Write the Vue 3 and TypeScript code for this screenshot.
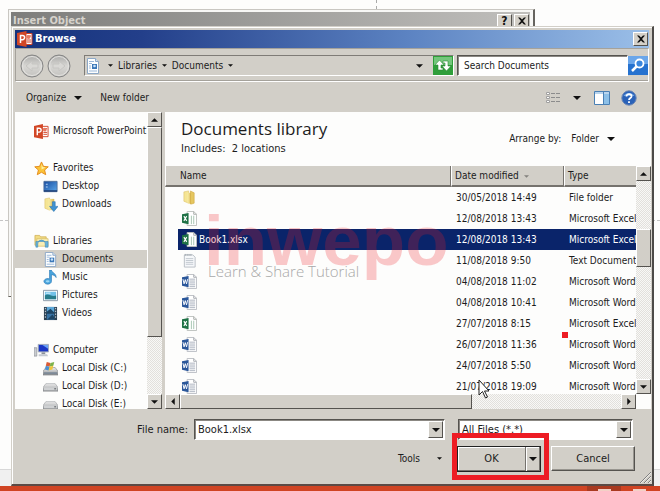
<script setup lang="ts">
import { ref } from 'vue'

interface NavItem { label: string; icon: string; child?: boolean }
interface FileRow { name: string; icon: string; date: string; type: string }

const groups: NavItem[][] = [
  [{ label: 'Microsoft PowerPoint', icon: 'ppt' }],
  [
    { label: 'Favorites', icon: 'star' },
    { label: 'Desktop', icon: 'desktop', child: true },
    { label: 'Downloads', icon: 'downloads', child: true },
  ],
  [
    { label: 'Libraries', icon: 'libraries' },
    { label: 'Documents', icon: 'document', child: true },
    { label: 'Music', icon: 'music', child: true },
    { label: 'Pictures', icon: 'pictures', child: true },
    { label: 'Videos', icon: 'videos', child: true },
  ],
  [
    { label: 'Computer', icon: 'computer' },
    { label: 'Local Disk (C:)', icon: 'sysdisk', child: true },
    { label: 'Local Disk (D:)', icon: 'disk', child: true },
    { label: 'Local Disk (E:)', icon: 'disk', child: true },
  ],
]

const files: FileRow[] = [
  { name: '', icon: 'folder', date: '30/05/2018 14:49', type: 'File folder' },
  { name: '', icon: 'excel', date: '12/08/2018 13:43', type: 'Microsoft Excel' },
  { name: 'Book1.xlsx', icon: 'excel', date: '12/08/2018 13:43', type: 'Microsoft Excel' },
  { name: '', icon: 'text', date: '11/08/2018 9:50', type: 'Text Document' },
  { name: '', icon: 'word', date: '04/08/2018 11:02', type: 'Microsoft Word' },
  { name: '', icon: 'word', date: '04/08/2018 10:41', type: 'Microsoft Word' },
  { name: '', icon: 'excel', date: '27/07/2018 8:15', type: 'Microsoft Excel' },
  { name: '', icon: 'word', date: '26/07/2018 11:36', type: 'Microsoft Word' },
  { name: '', icon: 'word', date: '24/07/2018 5:50', type: 'Microsoft Word' },
  { name: '', icon: 'word', date: '21/07/2018 19:09', type: 'Microsoft Word' },
]

const place = ref('Documents')
const selected = ref(2)
const fileName = ref('Book1.xlsx')

function pick(i: number) {
  selected.value = i
  if (files[i].name) fileName.value = files[i].name
}
</script>

<template>
  <div class="desktop">
    <svg class="sprites" aria-hidden="true">
      <defs>
        <linearGradient id="g-ball" x1="0" y1="0" x2="0" y2="1">
          <stop offset="0" stop-color="#a9a9a7" /><stop offset=".5" stop-color="#d8d7d4" /><stop offset="1" stop-color="#c2c1be" />
        </linearGradient>
        <linearGradient id="g-fold" x1="0" y1="0" x2="1" y2="0">
          <stop offset="0" stop-color="#f8eda8" /><stop offset="1" stop-color="#dcb850" />
        </linearGradient>
        <linearGradient id="g-blue" x1="0" y1="0" x2="1" y2="1">
          <stop offset="0" stop-color="#174b9e" /><stop offset="1" stop-color="#5aa7ea" />
        </linearGradient>
        <linearGradient id="g-disk" x1="0" y1="0" x2="0" y2="1">
          <stop offset="0" stop-color="#f1f1f1" /><stop offset="1" stop-color="#8c8f92" />
        </linearGradient>
      </defs>
      <symbol id="i-down" viewBox="0 0 8 4"><path d="M0 0h8L4 4z" fill="#111" /></symbol>
      <symbol id="i-up" viewBox="0 0 8 4"><path d="M4 0l4 4H0z" fill="#111" /></symbol>
      <symbol id="i-left" viewBox="0 0 4 8"><path d="M4 0v8L0 4z" fill="#111" /></symbol>
      <symbol id="i-right" viewBox="0 0 4 8"><path d="M0 0l4 4-4 4z" fill="#111" /></symbol>
      <symbol id="i-close" viewBox="0 0 8 8"><path d="M0 .5h2l2 2 2-2h2L5 4l3 3.500H6l-2-2-2 2H0L3 4z" fill="#111" /></symbol>
      <symbol id="i-ppt" viewBox="0 0 16 16">
        <path d="M8 2.500h7v11H8z" fill="#fff" stroke="#d0442a" />
        <path d="M10 5h4M10 9h4M10 11h4" stroke="#d0442a" />
        <circle cx="11.500" cy="6" r="2" fill="#e77a62" />
        <path d="M0 2l9.500-2v16L0 14z" fill="#d24726" />
        <path d="M3.500 12V4.500h2a2 2 0 0 1 0 4.200h-2" fill="none" stroke="#fff" stroke-width="1.500" />
      </symbol>
      <symbol id="i-star" viewBox="0 0 16 16">
        <path d="M8 1l2.100 4.700 5.100.5-3.900 3.400 1.200 5L8 12l-4.500 2.600 1.200-5L.8 6.200l5.100-.5z" fill="#fbc437" stroke="#e38a1c" stroke-width="1" />
        <path d="M8 3l1.300 3.500 3 .4L8 9z" fill="#fff0a0" />
      </symbol>
      <symbol id="i-desktop" viewBox="0 0 16 16">
        <path d="M1 2.500h14v11H1z" fill="url(#g-blue)" stroke="#4e6f9c" />
        <path d="M1 12h14v1.500H1z" fill="#1d3b70" /><path d="M3 5h2v1H3zM3 8h2v1H3z" fill="#b5d4f4" />
      </symbol>
      <symbol id="i-folder" viewBox="0 0 16 16">
        <path d="M2 2l5-1v13l-5-2z" fill="#f5e594" stroke="#ddc068" stroke-width=".6" />
        <path d="M6 3h4v12l-4-1z" fill="url(#g-fold)" /><path d="M9 1l4 2v11l-3 1H9z" fill="#e5c65f" stroke="#cda63f" stroke-width=".6" />
      </symbol>
      <symbol id="i-downloads" viewBox="0 0 16 16">
        <path d="M2 2l5-1v13l-5-2z" fill="#f5e594" stroke="#ddc068" stroke-width=".6" />
        <path d="M6 2h6v12H6z" fill="url(#g-fold)" />
        <path d="M10 5h3v5h3l-4.500 5.500L7 10h3z" fill="#3f93d3" stroke="#2870ad" stroke-width=".6" />
      </symbol>
      <symbol id="i-libraries" viewBox="0 0 16 16">
        <path d="M1 1.500h5l1 1.500h6v9H1z" fill="#f2dc83" stroke="#cfae50" stroke-width=".8" />
        <path d="M3 5h12v8H3z" fill="#f9eeb4" stroke="#d8bd68" stroke-width=".8" />
        <path d="M4 14v-3.500a4 4 0 0 1 8 0V14h3V8H2v6z" fill="#65b2dc" stroke="#3e8ab8" stroke-width=".6" />
      </symbol>
      <symbol id="i-document" viewBox="0 0 16 16">
        <path d="M2.500.5h8l3 3v12h-11z" fill="#fdfefe" stroke="#8da8c6" /><path d="M10.500.5v3h3" fill="#d5e3f2" stroke="#8da8c6" />
        <path d="M4 3.500h5M4 5.500h3M4 8h2M4 10h2M4 13h8" stroke="#9ab8da" /><path d="M7 6h5v5H7z" fill="#3c78b8" /><circle cx="9.500" cy="8" r="1.300" fill="#c9e2fa" />
      </symbol>
      <symbol id="i-music" viewBox="0 0 16 16">
        <path d="M7 0h2c0 3 5 3 5 8-1-2-3-3-5-3v7a4 3 0 1 1-2-2.500z" fill="#4aa5dd" stroke="#2a78b5" stroke-width=".7" />
        <ellipse cx="5" cy="12" rx="2" ry="1.200" fill="#9bd7f6" />
      </symbol>
      <symbol id="i-pictures" viewBox="0 0 16 16">
        <path d="M.5 2.500h15v11H.5z" fill="#fff" stroke="#8595a5" /><path d="M2 4h12v8H2z" fill="#72c1e8" />
        <path d="M2 8c4-3 7 2 12 0v4H2z" fill="#287c8b" /><path d="M3 5h5v1H3z" fill="#e1f4fc" />
      </symbol>
      <symbol id="i-videos" viewBox="0 0 16 16">
        <path d="M1 1h14v14H1z" fill="#2b3f50" /><path d="M4 1h8v6H4z" fill="#5ca7d8" /><path d="M4 8h8v6.500H4z" fill="#3974a6" />
        <path d="M2.500 2v12M13.500 2v12" stroke="#dde6ee" stroke-dasharray="1.500 1.500" /><path d="M4 6l4-3 4 4v1H4zM5 14l5-5 2 3v2z" fill="#1c4464" />
      </symbol>
      <symbol id="i-computer" viewBox="0 0 16 16">
        <path d="M0 5h3v9H0z" fill="#c9ccd0" stroke="#7d828a" stroke-width=".6" /><path d="M4.500 1.500h11v8h-11z" fill="#1b37c4" stroke="#a8b0ba" />
        <path d="M9 2h6v4z" fill="#6ba1f5" /><path d="M8 10h4v2H8z" fill="#8a9099" /><path d="M5 12h9l1 2H5z" fill="#c4c9d0" />
      </symbol>
      <symbol id="i-disk" viewBox="0 0 16 16">
        <path d="M3 5h10l3 4v4H0V9z" fill="url(#g-disk)" stroke="#909497" stroke-width=".6" /><path d="M1 9h14v3H1z" fill="#cfd1d3" /><path d="M12 10h2v1h-2z" fill="#4c4f52" />
      </symbol>
      <symbol id="i-sysdisk" viewBox="0 0 16 16">
        <path d="M3 7h10l3 4v4H0v-4z" fill="url(#g-disk)" stroke="#75797d" stroke-width=".6" /><path d="M1 12h14v2H1z" fill="#7d8a97" />
        <path d="M4 1l4 1-1 4-4-1z" fill="#d95b35" /><path d="M8 2l4-1-1 4-4 1z" fill="#7cb24a" /><path d="M3 5l4 1-1 4-4-1z" fill="#4c8fcf" /><path d="M7 6l4-1-1 4-4 1z" fill="#f0c53c" />
      </symbol>
      <symbol id="i-excel" viewBox="0 0 16 16">
        <path d="M5.500.5h7l3 3v12h-10z" fill="#fff" stroke="#bcc0bd" /><path d="M12.500.5v3h3" fill="none" stroke="#a5aaa6" />
        <path d="M10 5v9M12.500 5v9" stroke="#a3c4af" /><path d="M0 3.500L7 2v12l-7-1.500z" fill="#1e7145" />
        <path d="M2 5.500l3 5M5 5.500l-3 5" stroke="#fff" stroke-width="1.200" />
      </symbol>
      <symbol id="i-word" viewBox="0 0 16 16">
        <path d="M5.500.5h7l3 3v12h-10z" fill="#fff" stroke="#bbbec4" /><path d="M12.500.5v3h3" fill="none" stroke="#a3a7ad" />
        <path d="M8 5.500h6M8 7.500h6M8 9.500h6M8 11.500h6M8 13.500h6" stroke="#a9b0bd" /><path d="M0 3.500L7 2v12l-7-1.500z" fill="#2b579a" />
        <path d="M1 5.500l1.200 5L3.500 6l1.300 4.500 1.200-5" fill="none" stroke="#fff" />
      </symbol>
      <symbol id="i-text" viewBox="0 0 16 16">
        <path d="M2.500 2h9L14 4.500V15H2.500z" fill="#f6f8fa" stroke="#b7bec4" /><path d="M3.500 1v2M5.500 1v2M7.500 1v2M9.500 1v2" stroke="#9ea6ad" />
        <path d="M4 6h8M4 8h8M4 10h8M4 12h8" stroke="#c0c8cf" />
      </symbol>
    </svg>

    <div class="guide guide-v"></div>
    <div class="guide guide-h"></div>
    <div class="status"></div>
    <div class="taskbar">
      <span class="task-cell"><span class="task-mark"></span></span><span class="task-mark"></span>
    </div>

    <section class="window insert" aria-label="Insert Object">
      <header class="caption inactive">
        <span class="caption-text">Insert Object</span>
        <button class="cap-btn help">?</button>
        <button class="cap-btn" aria-label="Close"><svg class="ic8"><use href="#i-close" /></svg></button>
      </header>
    </section>

    <section class="window browse" aria-label="Browse">
      <header class="caption active">
        <svg class="ic16"><use href="#i-ppt" /></svg>
        <span class="caption-text">Browse</span>
        <button class="cap-btn" aria-label="Close"><svg class="ic8"><use href="#i-close" /></svg></button>
      </header>

      <div class="navbar">
        <button class="ball" aria-label="Back">
          <svg viewBox="0 0 24 24"><circle cx="12" cy="12" r="11" fill="url(#g-ball)" stroke="#858585" /><circle cx="12" cy="12" r="9.500" fill="none" stroke="#e4e3e0" /><path d="M6 12l6-5v3h6v4h-6v3z" fill="#d9d8d5" stroke="#c6c5c2" /></svg>
        </button>
        <button class="ball" aria-label="Forward">
          <svg viewBox="0 0 24 24"><circle cx="12" cy="12" r="11" fill="url(#g-ball)" stroke="#858585" /><circle cx="12" cy="12" r="9.500" fill="none" stroke="#e4e3e0" /><path d="M18 12l-6-5v3H6v4h6v3z" fill="#d9d8d5" stroke="#c6c5c2" /></svg>
        </button>
        <div class="address">
          <svg class="ic16"><use href="#i-document" /></svg>
          <svg class="tri small lead"><use href="#i-down" /></svg>
          <button class="plain">Libraries</button>
          <svg class="tri small"><use href="#i-down" /></svg>
          <button class="plain">Documents</button>
          <svg class="tri small"><use href="#i-down" /></svg>
          <svg class="tri push"><use href="#i-down" /></svg>
          <button class="refresh" aria-label="Refresh">
            <svg viewBox="0 0 20 19"><path d="M0 0h20v19H0z" fill="#2f9e3a" /><path d="M1 1h18v8H1z" fill="#73c67b" /><path d="M2 9l4.500-5L11 9H8v3h2v2H5V9zM18 10l-4.500 5L9 10h3V7h-2V5h5v5z" fill="#fff" stroke="#2b8a35" stroke-width=".6" /></svg>
          </button>
        </div>
        <div class="search">
          <input type="text" placeholder="Search Documents" aria-label="Search Documents">
          <button class="search-btn" aria-label="Search">
            <svg viewBox="0 0 20 19"><path d="M0 0h20v19H0z" fill="#2672cf" /><path d="M0 0h20v8H0z" fill="#6aa6ea" /><path d="M9 10l-5 5" stroke="#fff" stroke-width="2.500" /><circle cx="11.500" cy="7.500" r="4" fill="#3a86dd" stroke="#fff" stroke-width="1.800" /></svg>
          </button>
        </div>
      </div>

      <div class="commands">
        <button class="plain organize">Organize <svg class="tri"><use href="#i-down" /></svg></button>
        <button class="plain">New folder</button>
        <button class="plain view" aria-label="Change view">
          <svg class="ic16" viewBox="0 0 16 16"><path d="M.5 2.500h3v2h-3zM.5 6.500h3v2h-3zM.5 10.500h3v2h-3z" fill="#fff" stroke="#a0a0a0" /><path d="M5 3.500h4M10 3.500h4M5 7.500h4M10 7.500h4M5 11.500h4M10 11.500h4" stroke="#8c8c8c" /></svg>
          <svg class="tri"><use href="#i-down" /></svg>
        </button>
        <button class="plain" aria-label="Preview pane">
          <svg class="ic16" viewBox="0 0 16 16"><path d="M.5 1.500h15v13H.5z" fill="#fff" stroke="#4a80b4" /><path d="M1 2h14v2H1z" fill="#b9d5ee" /><path d="M10 4h5v10h-5z" fill="#8cc0e8" /><path d="M9.500 2v12" stroke="#4a80b4" /></svg>
        </button>
        <button class="plain" aria-label="Help">
          <svg class="ic16" viewBox="0 0 16 16"><circle cx="8" cy="8" r="7.200" fill="#2a62b8" stroke="#6b86b4" /><path d="M2.500 6a6 5 0 0 1 11 0z" fill="#6fa3e3" /><path d="M5.500 6.500c0-3.500 5.500-3 5 0-.3 1.500-2.500 1.500-2.500 3.500M8 11.200v1.800" fill="none" stroke="#fff" stroke-width="1.800" /></svg>
        </button>
      </div>

      <div class="panes">
        <nav class="side">
          <div class="tree">
            <ul v-for="(g, gi) in groups" :key="gi">
              <li v-for="n in g" :key="n.label">
                <button class="node" :class="{ child: n.child, on: place === n.label }" @click="place = n.label">
                  <svg class="ic14"><use :href="'#i-' + n.icon" /></svg>{{ n.label }}
                </button>
              </li>
            </ul>
          </div>
          <div class="vbar">
            <button class="bar-btn" aria-label="Scroll up"><svg class="tri bar"><use href="#i-up" /></svg></button>
            <div class="thumb side-thumb"></div>
            <div class="grow"></div>
            <button class="bar-btn" aria-label="Scroll down"><svg class="tri bar"><use href="#i-down" /></svg></button>
          </div>
        </nav>

        <div class="main">
          <div class="lib-head">
            <div>
              <h1>Documents library</h1>
              <p>Includes:&nbsp; 2 locations</p>
            </div>
            <div class="arrange">Arrange by: <button class="plain">Folder <svg class="tri"><use href="#i-down" /></svg></button></div>
          </div>
          <div class="list">
            <div class="rows">
              <table>
                <colgroup><col><col class="c-date"><col class="c-type"></colgroup>
                <thead>
                  <tr><th class="first">Name</th><th>Date modified <svg class="tri small faint"><use href="#i-down" /></svg></th><th>Type</th></tr>
                </thead>
                <tbody>
                  <tr v-for="(f, i) in files" :key="i" :class="{ sel: selected === i }" @click="pick(i)">
                    <td class="first"><span class="file"><svg class="ic14"><use :href="'#i-' + f.icon" /></svg>{{ f.name }}</span></td>
                    <td>{{ f.date }}</td>
                    <td>{{ f.type }}</td>
                  </tr>
                </tbody>
              </table>
              <div class="watermark">
                <span class="brand">inwepo</span>
                <span class="motto">Learn &amp; Share Tutorial</span>
              </div>
            </div>
            <div class="vbar">
              <button class="bar-btn" aria-label="Scroll up"><svg class="tri bar"><use href="#i-up" /></svg></button>
              <div class="gap"></div>
              <div class="thumb list-thumb"></div>
              <div class="grow"></div>
              <button class="bar-btn" aria-label="Scroll down"><svg class="tri bar"><use href="#i-down" /></svg></button>
            </div>
          </div>
          <div class="hbar-row">
            <div class="hbar">
              <button class="bar-btn" aria-label="Scroll left"><svg class="tri-h"><use href="#i-left" /></svg></button>
              <div class="thumb wide-thumb"></div>
              <div class="grow"></div>
              <button class="bar-btn" aria-label="Scroll right"><svg class="tri-h"><use href="#i-right" /></svg></button>
            </div>
          </div>
        </div>
      </div>

      <div class="fields">
        <label for="fname">File name:</label>
        <div class="combo name">
          <input id="fname" v-model="fileName" type="text">
          <button class="drop" aria-label="Recent names"><svg class="tri"><use href="#i-down" /></svg></button>
        </div>
        <div class="combo filter">
          <select aria-label="File type"><option>All Files (*.*)</option></select>
          <span class="drop"><svg class="tri"><use href="#i-down" /></svg></span>
        </div>
      </div>
      <div class="actions">
        <button class="plain tools">Tools <svg class="tri small"><use href="#i-down" /></svg></button>
        <div class="ok">
          <button class="ok-main">OK</button>
          <button class="ok-drop" aria-label="More open options"><svg class="tri"><use href="#i-down" /></svg></button>
          <span class="highlight"></span>
        </div>
        <button class="cancel">Cancel</button>
      </div>
      <svg class="grip" viewBox="0 0 12 12"><path d="M1 12L12 1M5 12l7-7M9 12l3-3" stroke="#808080" /><path d="M2 12L12 2M6 12l6-6M10 12l2-2" stroke="#fff" stroke-width=".6" /></svg>
    </section>

    <span class="dot"></span>
    <svg class="cursor" viewBox="0 0 12 20"><path d="M1 1v15l3.500-3.500L7.500 19l2-1-3-6H11z" fill="#fff" stroke="#222" /></svg>
  </div>
</template>

<style>
body { margin: 0; background: #fdfdfc; }
</style>

<style scoped>
* { box-sizing: border-box; }
.desktop {
  position: relative; min-height: 100vh; overflow: hidden;
  font: 10px/14px "DejaVu Sans Condensed", "DejaVu Sans", "Noto Sans", sans-serif;
  color: #1c1c1c;
}
.sprites { position: absolute; width: 0; height: 0; }
button, input, select { font: inherit; color: inherit; margin: 0; padding: 0; border: 0; border-radius: 0; background: none; }
svg { display: block; flex: none; }
.ic8 { width: 8px; height: 8px; }
.ic14 { width: 15px; height: 15px; }
.ic16 { width: 16px; height: 16px; }
.tri { width: 8px; height: 4px; }
.tri.small { width: 5px; height: 3px; }
.tri.bar { width: 7px; height: 4px; }
.tri-h { width: 4px; height: 7px; }
.tri.faint { opacity: .4; }
.tri.push { margin-left: auto; width: 7px; }
.grow { flex: 1; }
.plain { display: flex; align-items: center; white-space: nowrap; }

.guide { position: absolute; }
.guide-v { left: 376px; top: 0; height: 9px; border-left: 1px dashed #aaa; }
.guide-h { left: 0; right: 0; top: 220px; border-top: 1px dashed #c4c4c4; }
.status { position: absolute; left: 0; right: 0; bottom: 5px; height: 17px; background: #f0f0f0; border-top: 1px solid #d8d8d8; }
.taskbar { position: absolute; left: 0; right: 0; bottom: 0; height: 5px; background: #d04423; display: flex; justify-content: flex-end; align-items: flex-end; gap: 12px; padding-right: 14px; }
.task-cell { display: flex; justify-content: center; align-items: flex-end; width: 34px; height: 5px; background: #a93a20; }
.task-mark { width: 13px; height: 2px; background: #f3d0c6; }

.window { position: absolute; background: #d2cfc8; }
.insert { left: 8px; top: 9px; right: 125px; height: 288px; border: 1px solid #c9c7c2; border-right: 2px solid #66645f; border-bottom: 1px solid #66645f; padding: 2px 3px 0 2px; background: #f7f7f5; }
.browse {
  left: 11px; top: 26px; right: 6px; bottom: 5px; display: flex; flex-direction: column;
  border: 1px solid #d2cfc8; border-right: 2px solid #4c4a47; border-bottom: 2px solid #5b4a45;
  box-shadow: inset 1px 1px #fff; padding: 3px 3px 0;
}
.caption { display: flex; align-items: center; height: 18px; font-size: 11px; font-weight: bold; flex: none; }
.caption-text { flex: 1; }
.caption.active { color: #fff; background: linear-gradient(90deg, #15327c, #233f8a 20%, #5c83c2 62%, #9bbfe8); gap: 2px; padding: 0 1px 0 2px; }
.caption.inactive { color: #d6d3cc; background: linear-gradient(90deg, #7d7d7b, #c0bfbc); gap: 2px; padding: 0 1px 0 2px; }
.cap-btn { display: flex; align-items: center; justify-content: center; width: 15px; height: 14px; background: #d4d0c8; color: #111; border: 1px solid; border-color: #fff #55534f #55534f #fff; }
.help { font-size: 12px; }

.navbar { display: flex; align-items: center; height: 34px; flex: none; padding: 1px 0 0 4px; border: 1px solid; border-color: #a5a29b #fff #fff #a5a29b; box-shadow: inset 0 -1px #a5a29b; }
.ball { width: 24px; height: 24px; margin-right: 3px; }
.ball svg { width: 24px; height: 24px; }
.address { display: flex; align-items: center; flex: 1; gap: 5px; height: 21px; margin: 0 3px 0 10px; border: 1px solid; border-color: #7f7c77 #fff #fff #7f7c77; }
.address .lead { margin-left: 2px; }
.refresh { width: 20px; height: 19px; margin-left: 5px; }
.refresh svg, .search-btn svg { width: 20px; height: 19px; }
.search { display: flex; align-items: center; width: 191px; height: 21px; }
.search input { flex: 1; min-width: 0; height: 21px; background: #fff; border: 1px solid; border-color: #55534f #fff #fff #55534f; box-shadow: inset 1px 1px #8b8883; padding: 0 6px; outline: 0; }
.search input::placeholder { color: #1c1c1c; opacity: 1; }

.commands { display: flex; align-items: center; height: 30px; flex: none; padding: 1px 12px 0 11px; }
.organize { gap: 8px; margin-right: 18px; }
.view { margin-left: auto; gap: 11px; margin-right: 13px; }
.commands .plain:last-child { margin-left: 11px; }

.panes { display: flex; flex: 1; min-height: 0; gap: 3px; margin-right: -2px; }
.side { display: flex; width: 147px; background: #fdfdfc; overflow: hidden; }
.tree { flex: 1; min-width: 0; overflow: hidden; padding-top: 10px; }
.tree ul { list-style: none; margin: 0 0 19px; padding: 0; }
.node { display: flex; align-items: center; gap: 4px; width: 100%; height: 18px; padding-left: 19px; white-space: nowrap; }
.node.child { padding-left: 28px; }
.node.on { background: #d2cfc8; }
.vbar, .hbar { display: flex; background: repeating-conic-gradient(#e2e0dc 0 25%, #f8f8f6 0 50%) 0 0 / 2px 2px; }
.vbar { flex-direction: column; width: 15px; flex: none; }
.hbar { flex: 1; }
.bar-btn, .thumb { background: #d2cfc8; border: 1px solid; border-color: #fff #55534f #55534f #fff; }
.bar-btn { display: flex; align-items: center; justify-content: center; width: 15px; height: 15px; flex: none; }
.side-thumb { height: 76%; max-height: 210px; }
.list-thumb { height: 38px; }
.gap { height: 48px; }
.wide-thumb { width: 62%; }

.main { display: flex; flex-direction: column; flex: 1; min-width: 0; background: #fdfdfc; }
.lib-head { display: flex; justify-content: space-between; height: 54px; flex: none; padding: 6px 36px 0 16px; }
h1 { margin: 0; font: 17px/22px "Open Sans", "Noto Sans", sans-serif; }
.lib-head p { margin: 2px 0 0; font-size: 11px; }
.arrange { display: flex; align-items: center; gap: 10px; height: 42px; }
.arrange .plain { gap: 8px; }
.list { display: flex; flex: 1; min-height: 0; }
.rows { position: relative; flex: 1; min-width: 0; overflow: hidden; }
table { width: 100%; table-layout: fixed; border-collapse: separate; border-spacing: 0; }
.c-date { width: 113px; }
.c-type { width: 72px; }
th { height: 21px; padding: 1px 0 0 3px; text-align: left; font-weight: normal; background: #d2cfc8; border-left: 1px solid #fff; border-right: 1px solid #75726d; border-bottom: 2px solid #75726d; white-space: nowrap; }
th:last-child { border-right: 0; }
th.first { padding-left: 14px; }
th svg { display: inline-block; vertical-align: middle; margin-left: 2px; }
td { height: 21px; padding: 0 0 0 5px; white-space: nowrap; overflow: hidden; }
td.first { padding-left: 13px; }
.file { display: flex; align-items: center; gap: 2px; height: 21px; padding-left: 4px; }
.sel td { color: #fff; background: #0a246a; }
.sel td.first { background: linear-gradient(90deg, transparent 13px, #0a246a 13px); }
.watermark { position: absolute; left: 39px; top: 33px; display: flex; flex-direction: column; pointer-events: none; white-space: nowrap; }
.brand { font: bold 71px/84px "Liberation Sans", Arial, sans-serif; color: rgba(237, 28, 36, .24); }
.motto { margin: -22px 0 0 4px; font: 300 15px/20px "Open Sans", sans-serif; color: #a8a8a8; }
.hbar-row { display: flex; height: 15px; flex: none; padding-right: 15px; }

.fields { display: flex; align-items: center; justify-content: flex-end; height: 21px; flex: none; margin: 10px 16px 0 0; font-size: 11px; }
.fields label { margin-left: 122px; margin-right: 6px; }
.combo { display: flex; height: 21px; background: #fff; border: 1px solid; border-color: #55534f #fff #fff #55534f; box-shadow: inset 1px 1px #8b8883; padding: 1px; }
.combo.name { flex: 1; margin-right: 13px; }
.combo.filter { width: 175px; }
.combo input, .combo select { flex: 1; min-width: 0; padding: 0 2px; outline: 0; appearance: none; background: none; }
.drop { display: flex; align-items: center; justify-content: center; width: 15px; background: #d2cfc8; border: 1px solid; border-color: #fff #55534f #55534f #fff; flex: none; }
.actions { display: flex; align-items: center; justify-content: flex-end; flex: none; height: 25px; margin: 6px 14px 13px 0; }
.tools { gap: 17px; margin-right: 15px; }
.ok { position: relative; display: flex; width: 84px; height: 26px; margin-right: 10px; border: 1px solid #222; box-shadow: inset -1px -1px #75726d, inset 1px 1px #fff; }
.ok-main { flex: 1; font-size: 11px; }
.ok-drop { display: flex; align-items: center; justify-content: center; width: 15px; border-left: 1px solid #75726d; box-shadow: inset 1px 0 #fff; }
.highlight { position: absolute; inset: -14px -9px -9px -6px; border: 5px solid #ed1c24; pointer-events: none; }
.cancel { width: 84px; height: 25px; font-size: 11px; border: 1px solid; border-color: #fff #55534f #55534f #fff; box-shadow: inset -1px -1px #98958f; }
.grip { position: absolute; right: 1px; bottom: 1px; width: 12px; height: 12px; }
.dot { position: absolute; left: 562px; top: 332px; width: 6px; height: 6px; background: #ed1c24; }
.cursor { position: absolute; left: 478px; top: 379px; width: 12px; height: 20px; }
</style>
